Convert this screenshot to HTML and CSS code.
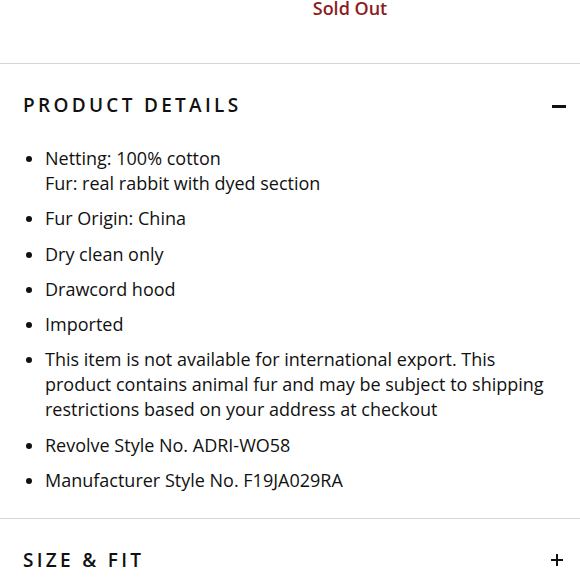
FILE: index.html
```html
<!DOCTYPE html>
<html>
<head>
<meta charset="utf-8">
<link rel="stylesheet" href="styles.css">
</head>
<body>
<div class="top">
  <span class="sold">Sold Out</span>
</div>
<section class="acc">
  <div class="acc-head">
    <h2 class="acc-title">PRODUCT DETAILS</h2>
    <span class="icon-minus"></span>
  </div>
  <ul class="details">
    <li>Netting: 100% cotton<br>Fur: real rabbit with dyed section</li>
    <li>Fur Origin: China</li>
    <li>Dry clean only</li>
    <li>Drawcord hood</li>
    <li>Imported</li>
    <li>This item is not available for international export. This product contains animal fur and may be subject to shipping restrictions based on your address at checkout</li>
    <li>Revolve Style No. ADRI-WO58</li>
    <li>Manufacturer Style No. F19JA029RA</li>
  </ul>
</section>
<section class="acc">
  <div class="acc-head">
    <h2 class="acc-title">SIZE &amp; FIT</h2>
    <span class="icon-plus"></span>
  </div>
</section>
</body>
</html>
```
FILE: styles.css
```css
* { box-sizing: border-box; }
html, body { margin: 0; padding: 0; background: #fff; }
body {
  font-family: "Open Sans", "Liberation Sans", sans-serif;
  color: #111;
  width: 580px;
  overflow: hidden;
}
.top {
  margin-top: -6px;
  height: 70px;
  padding-left: 120px;
  text-align: center;
  border-bottom: 1px solid #d5d5d5;
}
.sold {
  display: inline-block;
  font-size: 18px;
  line-height: 28px;
  font-weight: 600;
  color: #8b1d1f;
}
.acc {
  border-bottom: 1px solid #d5d5d5;
}
.acc-head {
  display: flex;
  justify-content: space-between;
  align-items: flex-start;
  padding: 28px 14px 0 23px;
  height: 80px;
}
.acc-title {
  margin: 0;
  font-size: 19px;
  line-height: 26px;
  font-weight: 600;
  letter-spacing: 3.3px;
  color: #111;
}
.icon-minus {
  width: 14px;
  height: 2.5px;
  background: #111;
  margin-top: 13px;
}
.icon-plus {
  position: relative;
  width: 12px;
  height: 12px;
  margin-top: 7px;
  margin-right: 3px;
}
.icon-plus::before, .icon-plus::after {
  content: "";
  position: absolute;
  background: #111;
}
.icon-plus::before { left: 0; right: 0; top: 5px; height: 2px; }
.icon-plus::after { top: 0; bottom: 0; left: 5px; width: 2px; }
.details {
  margin: 2px 0 0 0;
  padding: 0 18px 25px 45px;
  font-size: 18px;
  line-height: 25px;
  color: #111;
}
.details li { margin-bottom: 10.3px; }
.details li:last-child { margin-bottom: 0; }
```
